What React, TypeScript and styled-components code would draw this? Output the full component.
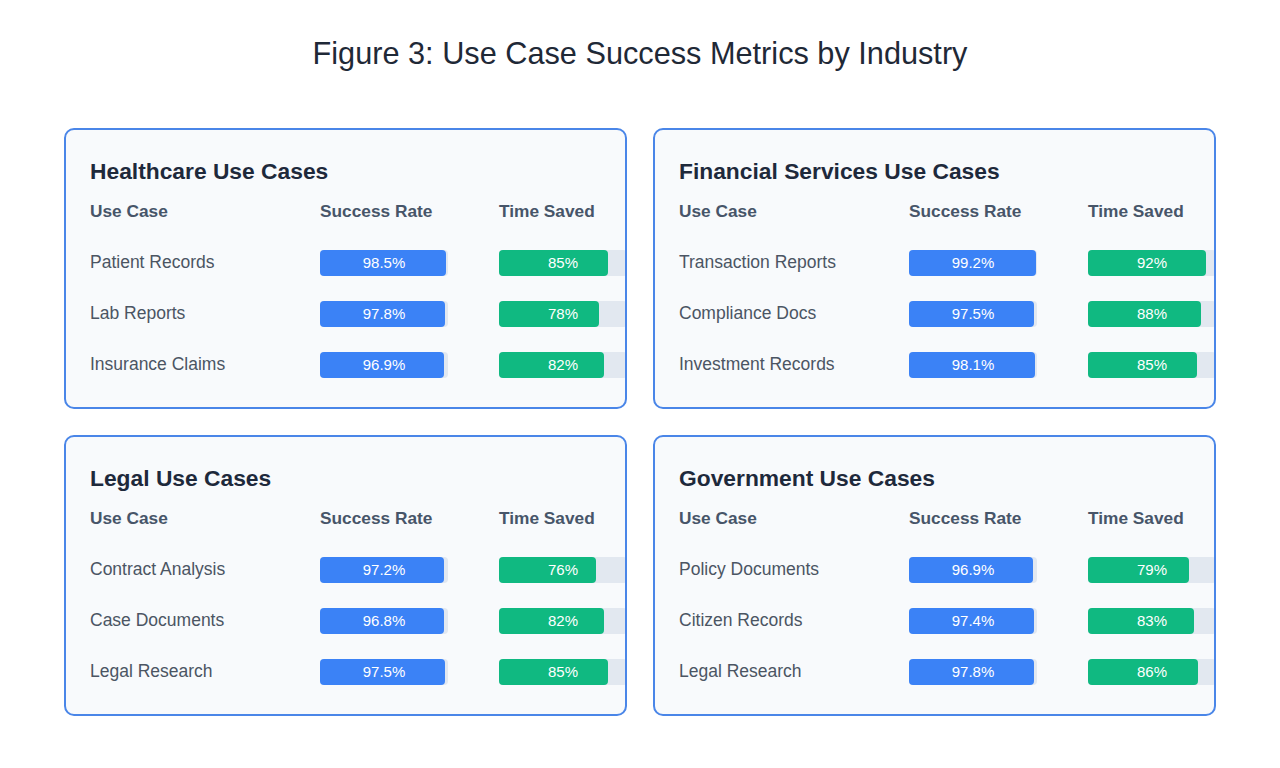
import React from "react";
import styled, { createGlobalStyle } from "styled-components";

const GlobalStyle = createGlobalStyle`
  html, body {
    margin: 0;
    padding: 0;
    background: #ffffff;
  }
  body {
    font-family: "Liberation Sans", Arial, Helvetica, sans-serif;
  }
  * { box-sizing: border-box; }
`;

const Page = styled.div`
  width: 1280px;
  height: 768px;
  padding: 39px 64px 0;
  background: #ffffff;
`;

const Heading = styled.h1`
  margin: 0 0 59px;
  font-size: 30.7px;
  line-height: 30px;
  font-weight: 400;
  color: #1f2937;
  text-align: center;
`;

const Grid = styled.div`
  display: grid;
  grid-template-columns: 563px 563px;
  gap: 26px;
`;

const Card = styled.section`
  background: #f8fafc;
  border: 2px solid #4a86e8;
  border-radius: 10px;
  padding: 30px 24px 17px;
  overflow: hidden;
`;

const CardTitle = styled.h2`
  margin: 0 0 21px;
  font-size: 22.8px;
  line-height: 22px;
  font-weight: 700;
  color: #1e293b;
`;

const Columns = styled.div`
  display: grid;
  grid-template-columns: 230px 179px 128px;
  align-items: center;
`;

const HeaderRow = styled(Columns)`
  margin-bottom: 17px;
`;

const HeaderCell = styled.div`
  font-size: 17.3px;
  line-height: 17px;
  font-weight: 700;
  color: #475569;
  white-space: nowrap;
`;

const Row = styled(Columns)`
  height: 51px;
`;

const Label = styled.div`
  font-size: 17.5px;
  line-height: 17px;
  color: #4b5563;
  white-space: nowrap;
`;

const Track = styled.div`
  position: relative;
  width: 128px;
  height: 26px;
  border-radius: 4px;
  background: #e2e8f0;
`;

const Fill = styled.div<{ $color: string }>`
  height: 100%;
  border-radius: 4px;
  background: ${(p) => p.$color};
`;

const BarText = styled.span`
  position: absolute;
  inset: 0;
  display: flex;
  align-items: center;
  justify-content: center;
  font-size: 15px;
  color: #ffffff;
`;

type Item = { name: string; rate: number; saved: number };
type Section = { title: string; items: Item[] };

const sections: Section[] = [
  {
    title: "Healthcare Use Cases",
    items: [
      { name: "Patient Records", rate: 98.5, saved: 85 },
      { name: "Lab Reports", rate: 97.8, saved: 78 },
      { name: "Insurance Claims", rate: 96.9, saved: 82 },
    ],
  },
  {
    title: "Financial Services Use Cases",
    items: [
      { name: "Transaction Reports", rate: 99.2, saved: 92 },
      { name: "Compliance Docs", rate: 97.5, saved: 88 },
      { name: "Investment Records", rate: 98.1, saved: 85 },
    ],
  },
  {
    title: "Legal Use Cases",
    items: [
      { name: "Contract Analysis", rate: 97.2, saved: 76 },
      { name: "Case Documents", rate: 96.8, saved: 82 },
      { name: "Legal Research", rate: 97.5, saved: 85 },
    ],
  },
  {
    title: "Government Use Cases",
    items: [
      { name: "Policy Documents", rate: 96.9, saved: 79 },
      { name: "Citizen Records", rate: 97.4, saved: 83 },
      { name: "Legal Research", rate: 97.8, saved: 86 },
    ],
  },
];

const Bar: React.FC<{ value: number; color: string; label: string }> = ({
  value,
  color,
  label,
}) => (
  <Track>
    <Fill $color={color} style={{ width: `${value}%` }} />
    <BarText>{label}</BarText>
  </Track>
);

export default function App() {
  return (
    <>
      <GlobalStyle />
      <Page>
        <Heading>Figure 3: Use Case Success Metrics by Industry</Heading>
        <Grid>
          {sections.map((s) => (
            <Card key={s.title}>
              <CardTitle>{s.title}</CardTitle>
              <HeaderRow>
                <HeaderCell>Use Case</HeaderCell>
                <HeaderCell>Success Rate</HeaderCell>
                <HeaderCell>Time Saved</HeaderCell>
              </HeaderRow>
              {s.items.map((it) => (
                <Row key={it.name}>
                  <Label>{it.name}</Label>
                  <Bar value={it.rate} color="#3b82f6" label={`${it.rate}%`} />
                  <Bar value={it.saved} color="#10b981" label={`${it.saved}%`} />
                </Row>
              ))}
            </Card>
          ))}
        </Grid>
      </Page>
    </>
  );
}
